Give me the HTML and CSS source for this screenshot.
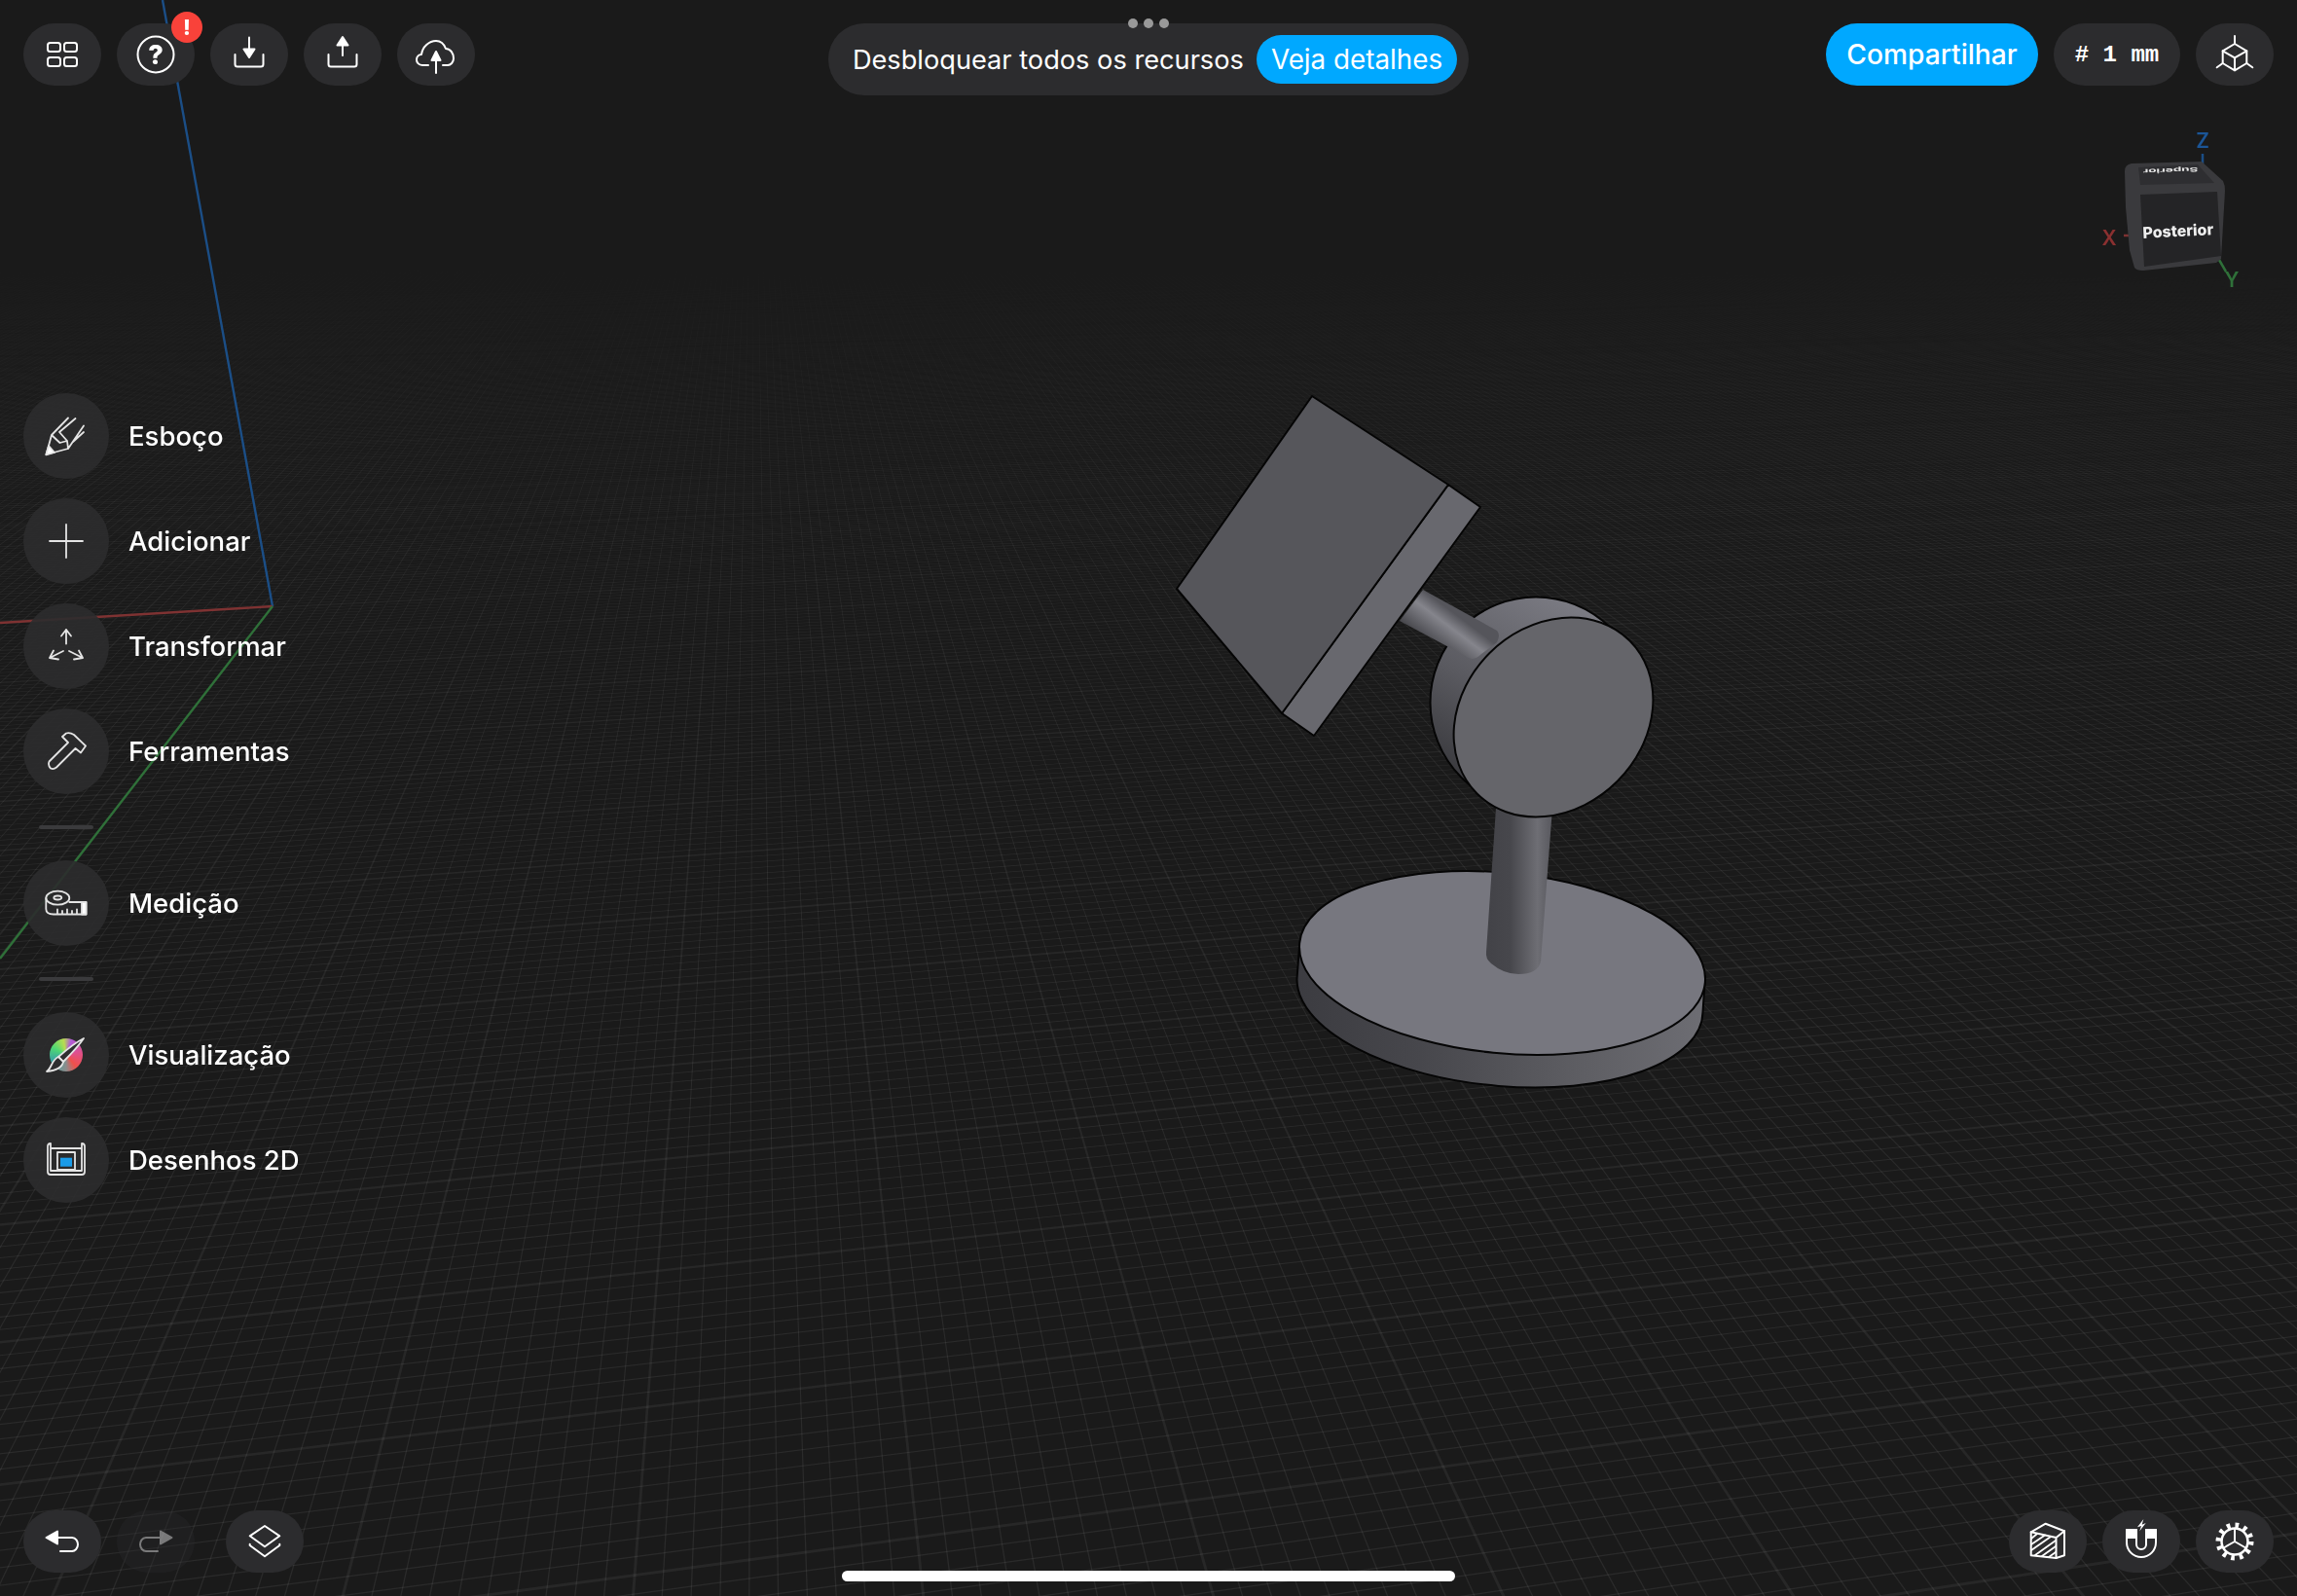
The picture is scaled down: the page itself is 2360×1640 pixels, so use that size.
FILE: index.html
```html
<!DOCTYPE html>
<html lang="pt-BR">
<head>
  <meta charset="UTF-8" />
  <meta name="viewport" content="width=device-width, initial-scale=1.0"/>
  <title>Shapr3D</title>
  <link rel="stylesheet" href="styles.css">
</head>
<body>

  <div class="app">
    <canvas id="gridCanvas" class="grid-canvas" width="2360" height="1640"></canvas>

    <!-- axes, model and view cube are placed on the free canvas -->
    <svg class="scene" viewBox="0 0 2360 1640">
      <defs>
        <linearGradient id="rodTop" x1="1462" y1="606" x2="1438" y2="638" gradientUnits="userSpaceOnUse">
          <stop offset="0" stop-color="#55555b"/>
          <stop offset="0.35" stop-color="#85858c"/>
          <stop offset="1" stop-color="#46464b"/>
        </linearGradient>
        <linearGradient id="rodLow" x1="1530" y1="0" x2="1592" y2="0" gradientUnits="userSpaceOnUse">
          <stop offset="0" stop-color="#434348"/>
          <stop offset="0.35" stop-color="#47474c"/>
          <stop offset="0.8" stop-color="#6e6e74"/>
          <stop offset="1" stop-color="#5c5c62"/>
        </linearGradient>
        <linearGradient id="backDisc" x1="1600" y1="610" x2="1490" y2="800" gradientUnits="userSpaceOnUse">
          <stop offset="0" stop-color="#7b7b83"/>
          <stop offset="0.55" stop-color="#5a5a60"/>
          <stop offset="1" stop-color="#38383c"/>
        </linearGradient>
        <linearGradient id="plateSide" x1="1335" y1="0" x2="1750" y2="0" gradientUnits="userSpaceOnUse">
          <stop offset="0" stop-color="#3c3c41"/>
          <stop offset="0.3" stop-color="#47474c"/>
          <stop offset="0.7" stop-color="#5e5e63"/>
          <stop offset="1" stop-color="#6d6d73"/>
        </linearGradient>
      </defs>

      <line class="axis-blue" x1="167" y1="0" x2="280" y2="623"/>
      <line class="axis-red" x1="0" y1="640" x2="280" y2="623"/>
      <line class="axis-green" x1="0" y1="985" x2="280" y2="623"/>

      <!-- base plate -->
      <path class="edge" fill="url(#plateSide)" d="M1335 973 L1332.5 1006 A209.3 92.7 5.6 0 0 1749.5 1040 L1752 1003 Z"/>
      <ellipse class="edge" fill="#77777f" cx="1543.5" cy="989.5" rx="209.3" ry="92.7" transform="rotate(5.6 1543.5 989.5)"/>

      <!-- lower rod -->
      <path fill="url(#rodLow)" d="M1537 830 L1595 830 L1583 988 Q1580 1001 1560 1001 Q1545 1001 1532 990 Q1526 985 1527 978 Z"/>

      <!-- back of the round head -->
      <circle class="edge" fill="url(#backDisc)" cx="1578" cy="722" r="108.5"/>

      <!-- plate on its arm -->
      <path fill="url(#rodTop)" d="M1462 606 L1538 648 Q1542 652 1538 660 L1522 672 Q1515 679 1509 676 L1438 638 Z"/>
      <path class="edge" fill="#68686e" d="M1488 498 L1521 521 L1350 756 L1317 733 Z"/>
      <path class="edge" fill="#56565b" d="M1348 407 L1488 498 L1317 733 L1209 605 Z"/>

      <!-- front of the round head -->
      <ellipse class="edge" fill="#65656a" cx="1596" cy="737" rx="111" ry="93" transform="rotate(-45 1596 737)"/>

      <!-- view cube -->
      <line class="gizmo-z" x1="2263" y1="158" x2="2263" y2="170"/>
      <line class="gizmo-x" x1="2182" y1="242" x2="2187" y2="242"/>
      <line class="gizmo-y" x1="2280" y1="267" x2="2287" y2="279"/>
      <path fill="#3a3a3d" d="M2183 176 Q2183 169 2190 168 L2262 166 L2284 186 Q2286 190 2286 196 L2282 266 L2277 270 L2202 278 Q2195 278 2193 275 L2188 257 L2184 213 Z"/>
      <path fill="#2e2e31" d="M2197 172 L2258 169 L2275 188 L2199 190 Z"/>
      <path fill="#242426" d="M2199 200 L2278 197 L2282 263 L2203 274 Z"/>
      <text class="cube-top" transform="translate(2230 173) rotate(178) scale(1 0.45)" text-anchor="middle">Superior</text>
      <text class="cube-front" transform="translate(2238 243) rotate(-3)" text-anchor="middle">Posterior</text>
      <text class="gizmo-label label-z" x="2263" y="152" text-anchor="middle">Z</text>
      <text class="gizmo-label label-x" x="2167" y="252" text-anchor="middle">X</text>
      <text class="gizmo-label label-y" x="2293" y="295" text-anchor="middle">Y</text>
    </svg>

    <header class="topbar">
      <div class="btn-group">
        <button class="pill">
          <svg class="icon" viewBox="-24 -24 48 48"><rect x="-15" y="-12" width="13" height="9" rx="2.5"/><rect x="2" y="-12" width="13" height="9" rx="2.5"/><rect x="-15" y="3" width="13" height="9" rx="2.5"/><rect x="2" y="3" width="13" height="9" rx="2.5"/></svg>
        </button>
        <button class="pill">
          <svg class="icon" viewBox="-24 -24 48 48"><circle r="18.5"/><text class="help-mark" y="9.5" text-anchor="middle">?</text></svg>
          <span class="badge">!</span>
        </button>
        <button class="pill">
          <svg class="icon" viewBox="-24 -24 48 48"><path d="M-14.5 0 V10 Q-14.5 12.5 -12 12.5 H12 Q14.5 12.5 14.5 10 V0"/><path d="M0 -17.5 V-6"/><path class="solid" d="M-5.5 -5.5 H5.5 L0 3 Z"/></svg>
        </button>
        <button class="pill">
          <svg class="icon" viewBox="-24 -24 48 48"><path d="M-14.5 0 V10 Q-14.5 12.5 -12 12.5 H12 Q14.5 12.5 14.5 10 V0"/><path d="M0 -9 V1"/><path class="solid" d="M0 -18 L5.5 -9.5 H-5.5 Z"/></svg>
        </button>
        <button class="pill">
          <svg class="icon" viewBox="-24 -24 48 48"><path d="M-8 11 H-14 C-18 11 -20 8 -20 5.5 C-20 2 -17.5 0 -15 0 C-14 -8 -7 -14 0 -14 C5 -14 8.5 -10 10 -6 C15 -6 18 -1 18 4 C18 8 15 11 12 11 H7"/><path d="M0 6 V19"/><path class="solid" d="M0 -3 L4.5 6 H-4.5 Z"/></svg>
        </button>
      </div>

      <div class="promo">
        <span class="promo-dots"><i></i><i></i><i></i></span>
        <span class="promo-text">Desbloquear todos os recursos</span>
        <a class="promo-btn">Veja detalhes</a>
      </div>

      <div class="btn-group right">
        <button class="pill share">Compartilhar</button>
        <button class="pill units"># 1 mm</button>
        <button class="pill">
          <svg class="icon" viewBox="-24 -24 48 48"><path d="M0 -19 V-11 L12.3 -3.7 V9 L0 16.3 L-12.3 9 V-3.7 L0 -11"/><path d="M-12.3 -3.7 L0 3.3 L12.3 -3.7 M0 3.3 V16.3 M12.3 9 L18.3 13.3 M-12.3 9 L-18.3 13.3"/></svg>
        </button>
      </div>
    </header>

    <aside class="tools">
      <div class="tool">
        <span class="tool-btn">
          <svg class="icon thin" viewBox="-24 -24 48 48"><path d="M-20.5 19 L-15 -1 L2 -18.5 M-7 -4 L9.5 -18 M-20.5 19 L2 13 L18 -10.5 M-15 -1 L-6.5 7 L1 5 L2 13 M1 5 L-7 -4 M7 6 L18 -4"/><path class="solid" d="M-20.7 19.3 L-18 10 L-12 17 Z"/></svg>
        </span>
        Esboço
      </div>
      <div class="tool">
        <span class="tool-btn">
          <svg class="icon thin" viewBox="-24 -24 48 48"><path d="M-17 0 H17 M0 -17 V17"/></svg>
        </span>
        Adicionar
      </div>
      <div class="tool">
        <span class="tool-btn">
          <svg class="icon thin" viewBox="-24 -24 48 48"><path d="M0 -2.5 V-17 M-5 -10.5 L0 -17 L5 -10.5 M-3 5 L-17 12 M-13 4.5 L-17 12 L-8 13.5 M3 5 L17 12 M13 4.5 L17 12 L8 13.5"/></svg>
        </span>
        Transformar
      </div>
      <div class="tool">
        <span class="tool-btn">
          <svg class="icon thin" viewBox="-24 -24 48 48"><path d="M-17.5 10.5 L2 -9 L-4 -15 L0 -18.5 Q4 -19.5 8 -17 L20 -5.5 L15 1.5 L9.5 -3 L-10 16.5 Q-13 19 -16 17.5 Q-19 14.5 -17.5 10.5 Z"/></svg>
        </span>
        Ferramentas
      </div>

      <hr class="divider">

      <div class="tool">
        <span class="tool-btn">
          <svg class="icon thin" viewBox="-24 -24 48 48"><ellipse cx="-8.7" cy="-5.3" rx="12" ry="7"/><ellipse cx="-8.7" cy="-5.5" rx="4" ry="2"/><path d="M-20.7 -5 V6 Q-20.7 11.5 -13 11.5 H20.5 V-1 H3.3 M-9 11 V6.5 M-4 11 V8 M1 11 V6.5 M6 11 V8 M11 11 V6.5"/><rect class="solid" x="16" y="-1" width="4.5" height="12.5"/></svg>
        </span>
        Medição
      </div>

      <hr class="divider">

      <div class="tool">
        <span class="tool-btn">
          <span class="palette"></span>
          <svg class="icon thin brush" viewBox="-24 -24 48 48"><path class="dark" d="M18 -17 C12 -8 4 0 -3 7 L-8 2 C0 -5 10 -13 18 -17 Z"/><path class="dark" d="M-8 2 L-3 7 C-4 12 -9 16 -20 17 C-15 14 -15 5 -8 2 Z"/></svg>
        </span>
        Visualização
      </div>
      <div class="tool">
        <span class="tool-btn">
          <svg class="icon thin" viewBox="-24 -24 48 48"><path d="M-19 -14 Q-19 -17 -16 -17 V-12 H16 V-17 Q19 -17 19 -14 V12 Q19 15 16 15 H-16 Q-19 15 -19 12 Z M-16 -12 V11 H16 V-12"/><rect x="-9" y="-8" width="18" height="18"/><rect class="blue" x="-6" y="-2.3" width="12" height="9"/></svg>
        </span>
        Desenhos 2D
      </div>
    </aside>

    <footer class="bottombar">
      <div class="btn-group">
        <button class="pill">
          <svg class="icon" viewBox="-24 -24 48 48"><path d="M-5 -4 H10 C14 -4 16 0 16 3 C16 7 13 10 10 10 H-2"/><path class="solid" d="M-16.5 -4 L-5 -10.5 V2.5 Z"/></svg>
        </button>
        <button class="pill off">
          <svg class="icon" viewBox="-24 -24 48 48"><path d="M5 -4 H-10 C-14 -4 -16 0 -16 3 C-16 7 -13 10 -10 10 H2"/><path class="solid" d="M16.5 -4 L5 -10.5 V2.5 Z"/></svg>
        </button>
        <button class="pill layers">
          <svg class="icon" viewBox="-24 -24 48 48"><path d="M0 -16 L15.3 -5.7 L0 5.3 L-15.3 -5.7 Z"/><path d="M-15.3 2.7 V4 L0 15.3 L15.3 4 V2.7"/></svg>
        </button>
      </div>
      <div class="btn-group">
        <button class="pill">
          <svg class="icon" viewBox="-24 -24 48 48"><path d="M-17.3 -9.7 L-2.3 -18.3 L17 -10.7 V14.3 L8.5 17 L-17.3 14.3 Z"/><path d="M-17.3 -9.7 L8.5 -4 L17 -10.7 M8.5 -4 V17"/><path class="hatch" d="M-17 -3 L-11 -8 M-17 3 L-3 -6.5 M-17 9 L3 -5 M-13 14 L8 -1 M-6 15 L8 5 M1 16 L8 11"/></svg>
        </button>
        <button class="pill">
          <svg class="icon" viewBox="-24 -24 48 48"><path d="M-15 -12 H-5 V3 A5 5 0 0 0 5 3 V-12 H15 V1 A15 15 0 0 1 -15 1 Z"/><path class="solid" d="M-15 -12 H-5 V-4 H-15 Z M5 -12 H15 V-4 H5 Z"/><path class="bolt" d="M2.3 -23 L-4 -14.7 L0 -16 L-1.7 -10.7 L4.7 -19 L0.7 -17.3 Z"/></svg>
        </button>
        <button class="pill">
          <svg class="icon" viewBox="-24 -24 48 48"><circle class="teeth" r="16.5"/><circle class="gear-ring" r="13.5"/><path d="M0 0 V-12 M0 0 L10.4 6 M0 0 L-10.4 6"/></svg>
        </button>
      </div>
    </footer>

    <div class="home-bar"></div>
  </div>

  <script src="grid.js"></script>
</body>
</html>
```

FILE: styles.css
```css
* {
  box-sizing: border-box;
}

body {
  margin: 0;
  background-color: #1a1a1a;
  color: white;
  font-family: Inter, "Noto Sans", sans-serif;
  overflow: hidden;
}

.app {
  position: relative;
  width: 2360px;
  height: 1640px;
  padding: 24px;
  display: flex;
  flex-direction: column;
}

.grid-canvas {
  position: absolute;
  top: 0;
  left: 0;
  -webkit-mask-image: linear-gradient(to bottom, transparent 260px, rgba(0, 0, 0, 0.85) 520px, black 800px);
  mask-image: linear-gradient(to bottom, transparent 260px, rgba(0, 0, 0, 0.85) 520px, black 800px);
}

.scene {
  position: absolute;
  top: 0;
  left: 0;
  width: 2360px;
  height: 1640px;
}

.axis-blue, .axis-red, .axis-green {
  stroke-width: 2.4;
}

.axis-blue { stroke: #1b4e86; }
.axis-red { stroke: #7e3232; }
.axis-green { stroke: #2f7039; }

.edge {
  stroke: #050505;
  stroke-width: 2;
  stroke-linejoin: round;
}

.gizmo-z, .gizmo-x, .gizmo-y {
  stroke-width: 2.5;
}

.gizmo-z { stroke: #1b4e86; }
.gizmo-x { stroke: #7e3232; }
.gizmo-y { stroke: #2f7039; }

.gizmo-label {
  font-size: 21px;
  font-weight: 600;
}

.label-z { fill: #1b5596; }
.label-x { fill: #8a3030; }
.label-y { fill: #2f7039; }

.cube-top {
  fill: #e6e6e6;
  font-size: 13.5px;
  font-weight: 700;
}

.cube-front {
  fill: #eeeeee;
  font-size: 16px;
  font-weight: 800;
}

.topbar {
  position: relative;
  display: grid;
  grid-template-columns: 1fr auto 1fr;
  align-items: start;
}

.btn-group {
  display: flex;
  gap: 16px;
}

.btn-group.right {
  justify-content: flex-end;
}

.pill {
  position: relative;
  width: 80px;
  height: 64px;
  padding: 0;
  border: none;
  border-radius: 32px;
  background-color: #2c2c2e;
  color: white;
  font-family: inherit;
  display: flex;
  align-items: center;
  justify-content: center;
}

.pill.off {
  background-color: rgba(44, 44, 46, 0.35);
}

.pill.off .icon {
  opacity: 0.4;
}

.pill.layers {
  margin-left: 16px;
}

.pill.share {
  width: 218px;
  background-color: #00a8ff;
  font-size: 28.2px;
  font-weight: 500;
}

.pill.units {
  width: 130px;
  font-family: "Liberation Mono", monospace;
  font-size: 24px;
  font-weight: 700;
}

.icon {
  width: 48px;
  height: 48px;
  fill: none;
  stroke: white;
  stroke-width: 2;
  stroke-linecap: round;
  stroke-linejoin: round;
}

.icon.thin {
  stroke: #e4e4e4;
  stroke-width: 1.8;
}

.icon .solid {
  fill: white;
}

.icon .bolt {
  fill: white;
  stroke: none;
}

.icon .blue {
  fill: #1a9be8;
  stroke: none;
}

.icon .dark {
  fill: #2e2e30;
}

.icon .hatch {
  stroke-width: 1.8;
}

.icon .teeth {
  stroke-width: 6;
  stroke-dasharray: 3.6 5.04;
  stroke-linecap: butt;
}

.icon .gear-ring {
  stroke-width: 2.5;
}

.help-mark {
  fill: white;
  stroke: none;
  font-size: 27px;
  font-weight: 800;
}

.badge {
  position: absolute;
  top: -12px;
  right: -8px;
  width: 32px;
  height: 32px;
  border-radius: 50%;
  background-color: #f9423a;
  color: white;
  font-size: 22px;
  font-weight: 800;
  line-height: 32px;
  text-align: center;
}

.promo {
  position: relative;
  height: 74px;
  padding: 12px 12px 12px 25px;
  border-radius: 37px;
  background-color: #2c2c2e;
  display: flex;
  align-items: center;
  gap: 13px;
  font-size: 27.2px;
}

.promo-dots {
  position: absolute;
  top: -5px;
  left: 50%;
  transform: translateX(-50%);
  display: flex;
  gap: 6px;
}

.promo-dots i {
  width: 10px;
  height: 10px;
  border-radius: 50%;
  background-color: #999;
}

.promo-btn {
  height: 50px;
  padding: 0 15px;
  border-radius: 25px;
  background-color: #00a8ff;
  font-size: 27.8px;
  line-height: 50px;
}

.tools {
  position: relative;
  width: 320px;
  margin-top: 306px;
  display: flex;
  flex-direction: column;
  gap: 20px;
}

.tool {
  display: flex;
  align-items: center;
  gap: 20px;
  font-size: 27.5px;
  font-weight: 500;
}

.tool-btn {
  position: relative;
  width: 88px;
  height: 88px;
  border-radius: 50%;
  background-color: rgba(44, 44, 46, 0.9);
  display: flex;
  align-items: center;
  justify-content: center;
  flex-shrink: 0;
}

.palette {
  position: absolute;
  top: 27px;
  left: 27px;
  width: 34px;
  height: 34px;
  border-radius: 50%;
  background: conic-gradient(from 20deg, #b05ad8 0deg, #e0508c 60deg, #f0504a 120deg, #8c8c8c 160deg, #3aa6a0 230deg, #4fd873 280deg, #b8dc50 330deg, #b05ad8 360deg);
}

.brush {
  position: relative;
}

.divider {
  width: 56px;
  height: 4px;
  margin: 12px 16px;
  border: none;
  border-radius: 2px;
  background-color: #3a3a3c;
}

.bottombar {
  position: relative;
  margin-top: auto;
  display: flex;
  justify-content: space-between;
}

.home-bar {
  position: absolute;
  left: 865px;
  bottom: 15px;
  width: 630px;
  height: 11px;
  border-radius: 6px;
  background-color: white;
}
```

FILE: grid.js
```js
// perspective grid on the floor plane, drawn from the two vanishing points
const canvas = document.getElementById("gridCanvas");
const ctx = canvas.getContext("2d");

const origin = { x: 280, y: 623 };
const vpDepth = { x: 775, y: -10 };
const vpSide = { x: 12700, y: 0 };

const stepSide = 0.00096;
const stepDepth = 0.00462;

function thickness(y, base) {
  return Math.max(0.45, base * y / 1640);
}

function drawLine(a, b, base, color) {
  const dx = b.x - a.x;
  const dy = b.y - a.y;
  const len = Math.hypot(dx, dy);
  const nx = -dy / len;
  const ny = dx / len;
  const wa = thickness(a.y, base) / 2;
  const wb = thickness(b.y, base) / 2;

  ctx.fillStyle = color;
  ctx.beginPath();
  ctx.moveTo(a.x + nx * wa, a.y + ny * wa);
  ctx.lineTo(b.x + nx * wb, b.y + ny * wb);
  ctx.lineTo(b.x - nx * wb, b.y - ny * wb);
  ctx.lineTo(a.x - nx * wa, a.y - ny * wa);
  ctx.closePath();
  ctx.fill();
}

function style(k) {
  return k % 10 === 0
    ? { base: 3, color: "rgba(255,255,255,0.06)" }
    : { base: 1.35, color: "rgba(255,255,255,0.072)" };
}

// lines running away from the viewer
for (let k = -280; k <= 1000; k++) {
  const s = k * stepSide - 0.0009;
  const px = (s * vpSide.x + origin.x) / (s + 1);
  const py = (s * vpSide.y + origin.y) / (s + 1);
  const slope = (px - vpDepth.x) / (py - vpDepth.y);
  const top = { x: px + (200 - py) * slope, y: 200 };
  const bottom = { x: px + (1700 - py) * slope, y: 1700 };
  const st = style(k);
  drawLine(top, bottom, st.base, st.color);
}

// lines running across
for (let k = -300; k <= 170; k++) {
  const w = -k * stepDepth - 0.0018;
  const px = (w * vpDepth.x + origin.x) / (w + 1);
  const py = (w * vpDepth.y + origin.y) / (w + 1);
  const slope = (py - vpSide.y) / (px - vpSide.x);
  const left = { x: -50, y: py + (-50 - px) * slope };
  const right = { x: 2410, y: py + (2410 - px) * slope };
  const st = style(k);
  drawLine(left, right, st.base, st.color);
}
```
